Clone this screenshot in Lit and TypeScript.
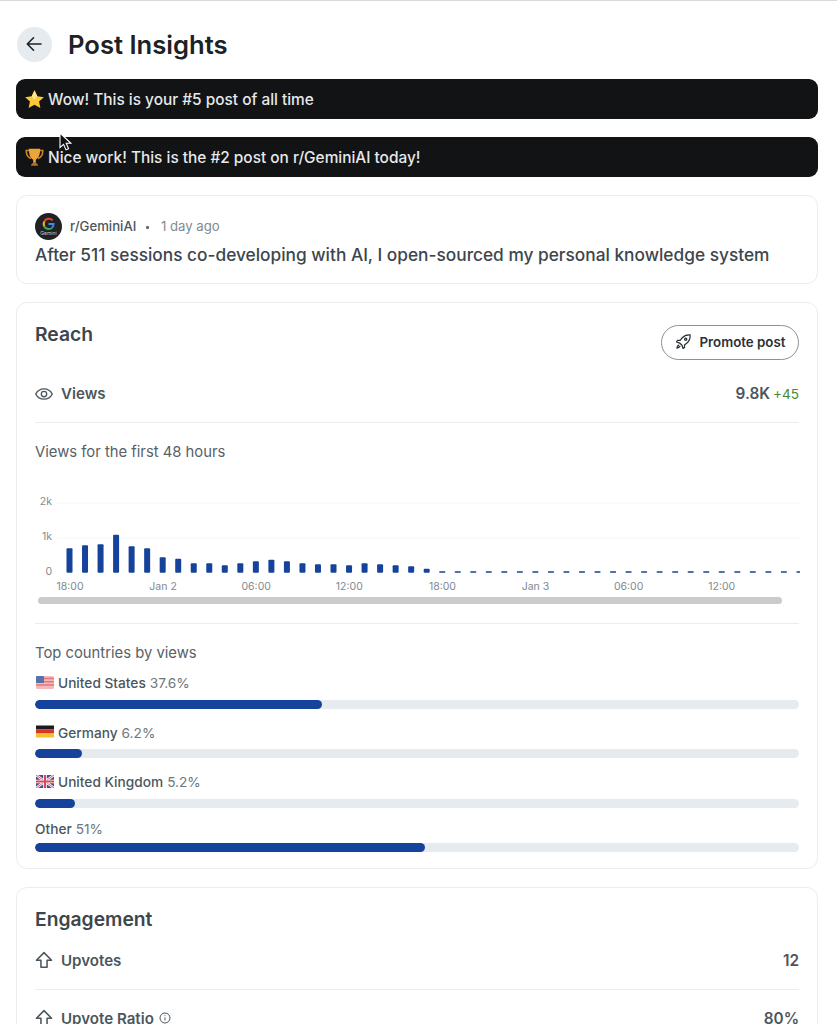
import { LitElement, html, css, svg } from "lit";
import { customElement } from "lit/decorators.js";

const heights = [24.5,27.5,28.5,38,26.5,24.5,15.5,14,9.5,9.5,7.5,9.5,11.5,13,11.5,9.5,8.5,8.5,7.5,9.5,8.5,7.5,6.5,4];
const bars = Array.from({ length: 48 }, (_, i) => heights[i] ?? 1.5);
const xLabels = ["18:00","Jan 2","06:00","12:00","18:00","Jan 3","06:00","12:00"];

const upIcon = html`<svg class="ico" viewBox="0 0 20 20" fill="none" stroke="currentColor" stroke-width="1.7" stroke-linejoin="round"><path d="M10 1.800 1.600 10.300h5V18h6.800v-7.700h5Z" stroke-linecap="round"/></svg>`;

const usFlag = html`<svg class="flag" viewBox="0 0 18 13"><rect width="18" height="13" rx="1.5" fill="#f3b9bb"/><path d="M0 2.500h18M0 5.800h18M0 9.100h18" stroke="#e5767b" stroke-width="1.500"/><rect width="8" height="7" rx="1" fill="#5573a8"/></svg>`;
const deFlag = html`<svg class="flag" viewBox="0 0 18 13"><rect y=".5" width="18" height="4" fill="#1b1b1b"/><rect y="4.500" width="18" height="4" fill="#d8352a"/><rect y="8.500" width="18" height="4" fill="#f5c02c"/></svg>`;
const ukFlag = html`<svg class="flag" viewBox="0 0 18 13"><rect width="18" height="13" rx="1.5" fill="#41508f"/><path d="M0 0l18 13M18 0 0 13" stroke="#fff" stroke-width="2.400"/><path d="M0 0l18 13M18 0 0 13" stroke="#d9485a" stroke-width=".9"/><path d="M9 0v13M0 6.500h18" stroke="#fff" stroke-width="3.600"/><path d="M9 0v13M0 6.500h18" stroke="#d9485a" stroke-width="2"/></svg>`;

const countries = [
  { flag: usFlag, name: "United States", pct: "37.6%", w: 37.6 },
  { flag: deFlag, name: "Germany", pct: "6.2%", w: 6.2 },
  { flag: ukFlag, name: "United Kingdom", pct: "5.2%", w: 5.2 },
  { flag: null, name: "Other", pct: "51%", w: 51 },
];

@customElement("app-root")
export class AppRoot extends LitElement {
  static styles = css`
    :host {
      display: block;
      position: relative;
      height: 1024px;
      overflow: hidden;
      background: #fff;
      font-family: Inter, "Liberation Sans", sans-serif;
      color: #3c464c;
      border-top: 1px solid #d9d9d9;
      box-sizing: border-box;
    }
    .page { padding: 25px 19px 0 16px; display: flex; flex-direction: column; }
    .head { display: flex; align-items: center; gap: 16px; margin: 0 0 17px 1px; height: 36px; }
    .back {
      width: 35px; height: 35px; border-radius: 50%; background: #e5ebee;
      display: flex; align-items: center; justify-content: center; color: #1c2326;
    }
    .back svg { width: 20px; height: 20px; margin-left: -2px; }
    h1 { margin: 2px 0 0; font-size: 25.6px; line-height: 36px; font-weight: 600; color: #1c2226; }
    .banner {
      height: 40px; border-radius: 9px; background: #111315; color: #e6e8e9;
      display: flex; align-items: center; gap: 3px; padding-left: 8px;
      font-size: 15.4px; font-weight: 500; margin-bottom: 18px;
    }
    .banner svg { width: 21px; height: 21px; flex: none; }
    .card { border: 1px solid #e9edef; border-radius: 11px; padding: 0 18px; }
    .post { height: 89px; box-sizing: border-box; padding-top: 16px; margin-bottom: 18px; }
    .meta { display: flex; align-items: center; font-size: 13.2px; height: 28px; }
    .avatar { width: 27px; height: 27px; flex: none; margin-right: 8px; }
    .sub { font-weight: 500; color: #4c565c; }
    .dot { width: 2.5px; height: 2.5px; border-radius: 50%; background: #5c666c; margin: 3px 12px 0 10px; }
    .age { color: #7f8a90; }
    .ptitle { font-size: 17.3px; font-weight: 500; line-height: 24px; margin-top: 3px; color: #3c464c; }
    .reach { height: 567px; box-sizing: border-box; margin-bottom: 18px; }
    .rhead { display: flex; justify-content: space-between; align-items: flex-start; padding-top: 21px; height: 76px; box-sizing: border-box; }
    h2 { margin: 0; font-size: 19.3px; line-height: 20px; font-weight: 600; color: #3c464c; }
    .promote {
      width: 138px; height: 35px; box-sizing: border-box; border: 1px solid #8b9296; border-radius: 18px;
      display: flex; align-items: center; justify-content: center; gap: 8px; margin-top: 1px; padding-bottom: 2px;
      font-size: 13.3px; font-weight: 600; color: #2b3338;
    }
    .promote svg { width: 17px; height: 17px; }
    .row {
      display: flex; justify-content: space-between; align-items: center; height: 29px;
      font-size: 15.1px; font-weight: 600; color: #4c565c;
    }
    .lab { display: flex; align-items: center; gap: 8px; }
    .ico { width: 18px; height: 18px; flex: none; color: #4c565c; }
    .val { font-size: 15.3px; }
    .delta { font-size: 13.6px; font-weight: 400; color: #4a8a2c; margin-left: 3px; }
    .rule { border: 0; border-top: 1px solid #e9edef; margin: 0; }
    .sec { font-size: 14.8px; color: #576167; line-height: 20px; }
    .chart { display: block; width: 765px; height: 130px; margin-top: 18px; }
    .scroll { height: 7px; width: 744px; margin: -13px 0 19px 3px; border-radius: 4px; background: #cbcbcb; position: relative; }
    .axis { font-size: 10.5px; fill: #7f8a90; }
    .clabel { display: flex; align-items: center; gap: 4px; font-size: 13.7px; line-height: 18px; height: 18px; font-weight: 500; color: #4c565c; }
    .clabel.withflag { height: 23px; }
    .clabel b { font-weight: 400; color: #6d787e; }
    .flag { width: 18px; height: 13px; flex: none; margin: -2px 0 0 1px; }
    .country { margin-bottom: 12.5px; }
    .track { height: 9px; border-radius: 5px; background: #e5ebee; margin-top: 5px; overflow: hidden; }
    .fill { height: 100%; border-radius: 5px; background: #15439c; }
    .eng { padding-top: 21px; height: 200px; box-sizing: border-box; }
    .eng h2 { margin-bottom: 15px; }
    .eng .row { height: 32px; }
    .eng .rule { margin: 13px 0 12px; }
    .info { width: 12px; height: 12px; color: #4c565c; flex: none; margin-left: -3px; }
    .cursor { position: absolute; left: 59px; top: 131px; width: 13px; height: 20px; }
  `;

  render() {
    return html`
      <div class="page">
        <div class="head">
          <div class="back">
            <svg viewBox="0 0 20 20" fill="none" stroke="currentColor" stroke-width="1.6" stroke-linecap="round" stroke-linejoin="round"><path d="M17 10H3.500M9.500 3.800 3.300 10l6.200 6.200"/></svg>
          </div>
          <h1>Post Insights</h1>
        </div>

        <div class="banner">
          <svg viewBox="0 0 24 24"><path d="M12 1.500l3.200 6.900 7.500.9-5.500 5.100 1.500 7.400L12 18.100l-6.700 3.700 1.500-7.400L1.300 9.300l7.500-.9Z" fill="#fcc934"/><path d="M12 1.500l3.200 6.900-3.200 4-3.200-4Z" fill="#ffe68a"/></svg>
          <span>Wow! This is your #5 post of all time</span>
        </div>
        <div class="banner">
          <svg viewBox="0 0 24 24"><path d="M6 4H2.500c0 5 1.500 8 5.500 9M18 4h3.500c0 5-1.500 8-5.500 9" fill="none" stroke="#c98526" stroke-width="1.800"/><path d="M5.500 2h13c0 7-2 11-5 12.500V18h-3v-3.500C7.500 13 5.500 9 5.500 2Z" fill="#e9a43a"/><path d="M8 21.500c0-2 1.500-3.500 4-3.500s4 1.500 4 3.500Z" fill="#b8701f"/></svg>
          <span>Nice work! This is the #2 post on r/GeminiAI today!</span>
        </div>

        <div class="card post">
          <div class="meta">
            <svg class="avatar" viewBox="0 0 27 27">
              <circle cx="13.500" cy="13.500" r="13.500" fill="#202124"/>
              <g fill="none" stroke-width="2">
                <path d="M17.600 7.200A5.200 5.200 0 0 0 9.300 8.600" stroke="#ea4335"/>
                <path d="M9.300 8.600a5.200 5.200 0 0 0 0 5" stroke="#fbbc05"/>
                <path d="M9.300 13.600a5.200 5.200 0 0 0 8 1" stroke="#34a853"/>
                <path d="M17.300 14.600a5 5 0 0 0 1.200-3.500h-5" stroke="#4285f4"/>
              </g>
              <text x="13.500" y="22" text-anchor="middle" font-size="5" fill="#c5c7ca" font-family="Inter, sans-serif">Gemini</text>
            </svg>
            <span class="sub">r/GeminiAI</span><span class="dot"></span><span class="age">1 day ago</span>
          </div>
          <div class="ptitle">After 511 sessions co-developing with AI, I open-sourced my personal knowledge system</div>
        </div>

        <div class="card reach">
          <div class="rhead">
            <h2>Reach</h2>
            <div class="promote">
              <svg viewBox="0 0 20 20" fill="none" stroke="#2b3338" stroke-width="1.500" stroke-linecap="round" stroke-linejoin="round"><path d="M17.800 2.200c-4-.3-7.200 1-9.600 3.700L6 8.800H3L1.800 10.500l3.700 1.300 2.700 2.700 1.300 3.700 1.700-1.200v-3l2.900-2.200c2.700-2.400 4-5.600 3.700-9.600Z"/><circle cx="12.600" cy="7.400" r="1.300"/><path d="M4.300 14.300c-1 .6-1.700 1.700-2 3.400 1.700-.3 2.800-1 3.400-2"/></svg>
              Promote post
            </div>
          </div>
          <div class="row">
            <span class="lab">
              <svg class="ico" viewBox="0 0 20 20" fill="none" stroke="currentColor" stroke-width="1.500"><path d="M.8 10C2.700 6.300 6 4.300 10 4.300s7.300 2 9.200 5.700c-1.900 3.700-5.200 5.700-9.200 5.700S2.700 13.700.8 10Z"/><circle cx="10" cy="10" r="3"/></svg>
              Views
            </span>
            <span class="val">9.8K<span class="delta">+45</span></span>
          </div>
          <hr class="rule" style="margin-top:14px" />
          <div class="sec" style="margin-top:19px">Views for the first 48 hours</div>
          <svg class="chart" viewBox="35 481 765 130">
            ${[[503, "2k"], [538, "1k"], [573, "0"]].map(([y, t]) => svg`
              ${t !== "0" ? svg`<line x1="57" x2="800" y1=${(y as number) + 1} y2=${(y as number) + 1} stroke="#f3f5f6" stroke-width="1"></line>` : ""}
              <text class="axis" x="52" y=${(y as number) + 3} text-anchor="end">${t}</text>`)}
            ${bars.map((h, i) => svg`<rect x=${66.5 + i * 15.53} y=${573.8 - h} width="6" height=${h} rx=${h > 3 ? 1 : 0.5} fill="#15439c"></rect>`)}
            ${xLabels.map((t, i) => svg`<text class="axis" x=${70 + i * 93.1} y="590.500" text-anchor="middle">${t}</text>`)}
          </svg>
          <div class="scroll"></div>
          <hr class="rule" />
          <div class="sec" style="margin-top:19px;margin-bottom:8.5px">Top countries by views</div>
          ${countries.map(c => html`
            <div class="country">
              <div class="clabel ${c.flag ? "withflag" : ""}">${c.flag}<span>${c.name}</span><b>${c.pct}</b></div>
              <div class="track"><div class="fill" style="width:${c.w}%"></div></div>
            </div>`)}
        </div>

        <div class="card eng">
          <h2>Engagement</h2>
          <div class="row"><span class="lab">${upIcon}Upvotes</span><span class="val">12</span></div>
          <hr class="rule" />
          <div class="row">
            <span class="lab">${upIcon}Upvote Ratio
              <svg class="info" viewBox="0 0 12 12" fill="none" stroke="currentColor" stroke-width="1"><circle cx="6" cy="6" r="5"/><path d="M6 5.500v3M6 3.300v.9"/></svg>
            </span>
            <span class="val">80%</span>
          </div>
        </div>
      </div>
      <svg class="cursor" viewBox="0 0 13 20"><path d="M1 1v14.500l3.600-3.200 2.400 5.600 2.600-1.100-2.400-5.500h4.700Z" fill="#111" stroke="#fff" stroke-width="1.100"/></svg>
    `;
  }
}
